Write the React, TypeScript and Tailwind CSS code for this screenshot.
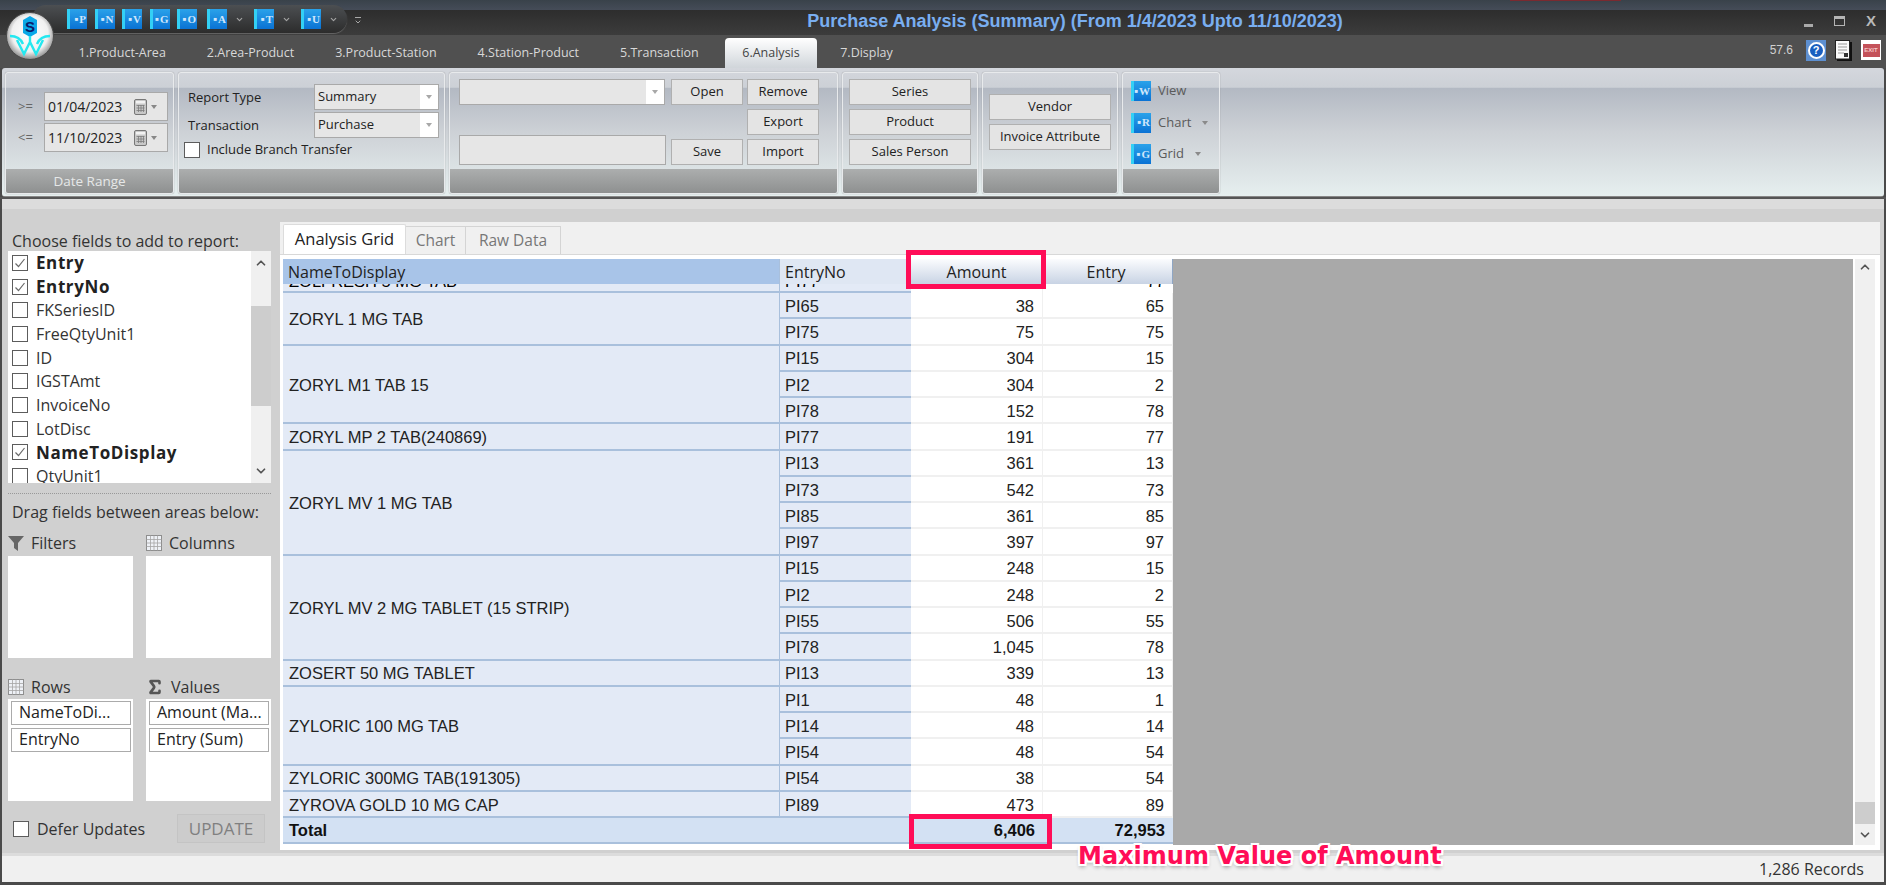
import React from 'react';
import { ChevronDown, ChevronUp, Sigma } from 'lucide-react';

type Sub = [string, string, string];
type Group = { name: string; rows: Sub[] };

const groups: Group[] = [
  { name: 'ZORYL 1 MG TAB', rows: [['PI65', '38', '65'], ['PI75', '75', '75']] },
  { name: 'ZORYL M1 TAB 15', rows: [['PI15', '304', '15'], ['PI2', '304', '2'], ['PI78', '152', '78']] },
  { name: 'ZORYL MP 2 TAB(240869)', rows: [['PI77', '191', '77']] },
  { name: 'ZORYL MV 1 MG TAB', rows: [['PI13', '361', '13'], ['PI73', '542', '73'], ['PI85', '361', '85'], ['PI97', '397', '97']] },
  { name: 'ZORYL MV 2 MG TABLET (15 STRIP)', rows: [['PI15', '248', '15'], ['PI2', '248', '2'], ['PI55', '506', '55'], ['PI78', '1,045', '78']] },
  { name: 'ZOSERT 50 MG TABLET', rows: [['PI13', '339', '13']] },
  { name: 'ZYLORIC 100 MG TAB', rows: [['PI1', '48', '1'], ['PI14', '48', '14'], ['PI54', '48', '54']] },
  { name: 'ZYLORIC 300MG TAB(191305)', rows: [['PI54', '38', '54']] },
  { name: 'ZYROVA GOLD 10 MG CAP', rows: [['PI89', '473', '89']] },
];

const fields: [string, boolean][] = [
  ['Entry', true],
  ['EntryNo', true],
  ['FKSeriesID', false],
  ['FreeQtyUnit1', false],
  ['ID', false],
  ['IGSTAmt', false],
  ['InvoiceNo', false],
  ['LotDisc', false],
  ['NameToDisplay', true],
  ['QtyUnit1', false],
];

const tabs = ['1.Product-Area', '2.Area-Product', '3.Product-Station', '4.Station-Product', '5.Transaction'];

const Caret = ({ className = 'border-t-[#9a9a9a]' }: { className?: string }) => (
  <span className={`inline-block w-0 h-0 border-x-[3px] border-x-transparent border-t-[4px] ${className}`} />
);

const BlueIcon = ({ letter }: { letter: string }) => (
  <span className="flex items-center justify-end w-[20px] h-[20px] pr-[1px] border-l-[3px] border-l-[#33d0f5] bg-[linear-gradient(#2aa2ea,#0a72d4)] font-['Liberation_Serif',serif] font-bold text-[11px] text-[#cfe6fb]">
    <span className="text-[6px] mr-[1px]">■</span>
    {letter}
  </span>
);

const Logo = () => (
  <svg viewBox="0 0 48 48" className="w-[48px] h-[48px]">
    <defs>
      <radialGradient id="silver" cx="50%" cy="45%" r="55%">
        <stop offset="0%" stopColor="#ffffff" />
        <stop offset="70%" stopColor="#f0f0f0" />
        <stop offset="100%" stopColor="#8a8a8a" />
      </radialGradient>
    </defs>
    <circle cx="24" cy="24" r="23.5" fill="url(#silver)" stroke="#4a4a4a" />
    <path d="M24 4l7 4v13l-7 4-7-4V8z" fill="#0aa8e8" />
    <text x="24" y="20" textAnchor="middle" fontFamily="Liberation Sans, sans-serif" fontWeight="700" fontSize="15" fill="#0a1a6a">S</text>
    <path d="M4 24c7 0 11 3 13 8M44 24c-7 0-11 3-13 8M11 28l7 14 6-12 6 12 7-14M24 24v6" fill="none" stroke="#25e8f0" strokeWidth="2.4" />
  </svg>
);

const CalendarIcon = () => (
  <span className="flex items-center gap-[3px]">
    <svg viewBox="0 0 14 16" className="w-[14px] h-[16px]">
      <rect x="0.5" y="0.5" width="12" height="15" rx="1.5" fill="#c8c8c8" stroke="#777" />
      <rect x="2" y="2" width="9" height="2.5" fill="#f2f2f2" />
      <path d="M2.5 6.5h8M2.5 9h8M2.5 11.5h8M4.5 6v7M7 6v7M9.5 6v7" stroke="#7c7c7c" strokeWidth="0.8" />
    </svg>
    <Caret className="border-t-[#888]" />
  </span>
);

const DateInput = ({ value }: { value: string }) => (
  <div className="flex items-center justify-between h-[29px] w-[124px] pl-[3px] pr-[10px] bg-[#e6e6e6] border border-[#a9a9a9] text-[#222] text-[14px]">
    {value}
    <CalendarIcon />
  </div>
);

const Combo = ({ value, w = 'w-[125px]' }: { value?: string; w?: string }) => (
  <div className={`flex h-[26px] ${w} bg-[#e6e6e6] border border-[#a9a9a9] text-[#222] text-[13px]`}>
    <span className="flex-1 px-[3px] leading-[22px]">{value}</span>
    <span className="flex items-center justify-center w-[18px] bg-white">
      <Caret className="border-t-[#a8a8a8]" />
    </span>
  </div>
);

const RibbonButton = ({ label, w = 'w-[72px]' }: { label: string; w?: string }) => (
  <div className={`flex items-center justify-center h-[26px] ${w} bg-[#e4e4e4] border border-[#b0b0b0] text-[#222] text-[13px]`}>
    {label}
  </div>
);

const RibbonGroup = ({ w, footer, children }: { w: string; footer?: string; children: React.ReactNode }) => (
  <div className={`flex flex-col ${w} h-[122px] rounded-[3px] border border-[#e8eaec] shadow-[0_0_1px_#777] overflow-hidden`}>
    <div className="flex-1 min-h-0">{children}</div>
    <div className="flex items-center justify-center h-[24px] bg-[linear-gradient(#acaeae,#8e9090)] text-[#e6e8e8] text-[13.5px]">
      {footer}
    </div>
  </div>
);

const SideItem = ({ letter, label, caret }: { letter: string; label: string; caret?: boolean }) => (
  <div className="flex items-center h-[20px] text-[#5a5a5a] text-[13px]">
    <BlueIcon letter={letter} />
    <span className="ml-[7px]">{label}</span>
    {caret && <Caret className="ml-[11px] border-t-[#8a8a8a]" />}
  </div>
);

const CheckBox = ({ checked }: { checked?: boolean }) => (
  <span className="flex items-center justify-center shrink-0 w-[16px] h-[16px] bg-white border-[1.5px] border-[#5c5c5c]">
    {checked && (
      <svg viewBox="0 0 12 12" className="w-[12px] h-[12px]">
        <path d="M1.5 6.5l3 3 6-7.5" fill="none" stroke="#6a6a6a" strokeWidth="1.2" />
      </svg>
    )}
  </span>
);

const GridGlyph = () => (
  <svg viewBox="0 0 16 16" className="w-[16px] h-[16px] shrink-0">
    <rect x="0.5" y="0.5" width="15" height="15" fill="#eef1f6" stroke="#8e8e8e" />
    <path d="M0.5 4.5h15M0.5 8h15M0.5 11.5h15M4.5 0.5v15M8 0.5v15M11.5 0.5v15" stroke="#a5a5a5" strokeWidth="0.8" />
  </svg>
);

const ZoneLabel = ({ icon, label }: { icon: React.ReactNode; label: string }) => (
  <div className="flex items-center gap-[7px] h-[20px] text-[#333]">
    {icon}
    {label}
  </div>
);

const Chip = ({ label }: { label: string }) => (
  <div className="h-[24px] mb-[3px] px-[7px] bg-white border-[1.5px] border-[#ababab] leading-[20px] text-[#222] whitespace-nowrap">{label}</div>
);

const headBase = 'flex items-center h-[25px] text-[16px] text-[#222]';
const nameCell = 'flex items-center pl-[6px] pt-[2px] bg-[#e3eaf6] border-b-2 border-[#a9c0dc] text-[#222]';
const subCell = 'flex items-center pl-[5px] pt-[2px] bg-[#e3eaf6] border-b-2 border-l border-[#a9c0dc] text-[#222]';
const dataCell = 'flex items-center justify-end pr-[8px] pt-[2px] bg-white border-b-2 border-r border-[#f0f0f0] text-[#222]';

const PivotGrid = () => (
  <div className="w-[890px] shrink-0 font-['Liberation_Sans',sans-serif] text-[16.5px]">
    <div className="grid grid-cols-[496px_132px_132px_130px] font-['Open_Sans',sans-serif]">
      <div className={`${headBase} pl-[5px] bg-[#a8c4e8] text-[16.8px]`}>NameToDisplay</div>
      <div className={`${headBase} pl-[5px] bg-[#dfe7f3] border-l border-[#a9c0dc]`}>EntryNo</div>
      <div className={`${headBase} justify-center bg-[linear-gradient(#fbfcfe,#c8d3e4)] border-r border-[#c0cbdc]`}>Amount</div>
      <div className={`${headBase} justify-center pr-[3px] bg-[linear-gradient(#fbfcfe,#c8d3e4)] border-r border-[#8fa6c4]`}>Entry</div>
    </div>
    <div className="grid grid-cols-[496px_132px_132px_130px] h-[9px] overflow-hidden">
      <div className="pl-[6px] bg-[#e3eaf6] border-b-2 border-[#a9c0dc] overflow-hidden"><p className="-mt-[15px]">ZOLFRESH 5 MG TAB</p></div>
      <div className="pl-[5px] bg-[#e3eaf6] border-b-2 border-l border-[#a9c0dc] overflow-hidden"><p className="-mt-[15px]">PI77</p></div>
      <div className="bg-white border-r border-[#f0f0f0]" />
      <div className="pr-[8px] text-right bg-white overflow-hidden"><p className="-mt-[15px]">77</p></div>
    </div>
    <div className="grid grid-cols-[496px_132px_132px_130px] auto-rows-[26.25px]">
      {groups.map((g) =>
        g.rows.map((r, i) => (
          <React.Fragment key={g.name + r[0]}>
            {i === 0 && (
              <div className={nameCell} style={{ gridRow: `span ${g.rows.length}` }}>
                {g.name}
              </div>
            )}
            <div className={`${subCell} col-start-2`}>{r[0]}</div>
            <div className={dataCell}>{r[1]}</div>
            <div className={dataCell}>{r[2]}</div>
          </React.Fragment>
        )),
      )}
      <div className="col-span-2 flex items-center pl-[6px] bg-[#d3e1f3] border-b-2 border-[#a9c0dc] font-bold text-[#111]">Total</div>
      <div className="flex items-center justify-end pr-[8px] bg-[#d3e1f3] border-b-2 border-[#a9c0dc] font-bold text-[#111]">6,406</div>
      <div className="flex items-center justify-end pr-[8px] bg-[#d3e1f3] border-b-2 border-[#a9c0dc] font-bold text-[#111]">72,953</div>
    </div>
  </div>
);

export default function App() {
  return (
    <div className="relative flex flex-col w-[1886px] h-[885px] overflow-hidden bg-[#4a4a4a] font-['Open_Sans',sans-serif]">
      {/* window chrome */}
      <div className="relative h-[10px] bg-[linear-gradient(#39424a,#454c58)]">
        <span className="absolute left-[1510px] top-0 w-[111px] h-px bg-[#7a2a30]" />
      </div>
      <div className="relative flex items-center justify-center h-[25px] pl-[264px] pb-[3px] bg-[linear-gradient(#2d2d2d,#3c3c3c)]">
        <span className="font-['Liberation_Sans',sans-serif] font-bold text-[18px] text-[#79aef0]">
          Purchase Analysis (Summary) (From 1/4/2023 Upto 11/10/2023)
        </span>
        <div className="absolute right-[10px] top-[3px] flex items-center gap-[21px] text-[#b9b9b9]">
          <span className="w-[9px] h-[3px] mt-[9px] bg-[#aaa]" />
          <span className="w-[11px] h-[10px] border-[1.5px] border-t-[3px] border-[#b5b5b5]" />
          <span className="font-['Liberation_Sans',sans-serif] font-bold text-[15px] leading-[16px]">X</span>
        </div>
      </div>

      {/* quick access pill + logo */}
      <div className="absolute left-[32px] top-[5px] flex items-center w-[315px] h-[28px] pl-[35px] rounded-[14px] bg-[linear-gradient(#4c4f52,#2c2c2c)] shadow-[0_1px_1px_#666]">
        <div className="flex gap-[7.5px]">
          {['P', 'N', 'V', 'G', 'O'].map((l) => (
            <BlueIcon key={l} letter={l} />
          ))}
        </div>
        {['A', 'T', 'U'].map((l) => (
          <span key={l} className="flex items-center ml-[10px] first:ml-[9px] gap-[8px]">
            <BlueIcon letter={l} />
            <ChevronDown size={9} strokeWidth={3} className="text-[#a5a5a5]" />
          </span>
        ))}
      </div>
      <span className="absolute left-[354px] top-[17px] flex flex-col items-center text-[#a8a8a8]">
        <span className="w-[6px] h-px bg-[#a8a8a8]" />
        <ChevronDown size={8} strokeWidth={3} />
      </span>
      <div className="absolute left-[6px] top-[12px]">
        <Logo />
      </div>

      {/* tabs */}
      <div className="flex items-end h-[33px] pl-[58px] bg-[#505050] text-[12.5px] text-[#d8d8d8]">
        {tabs.map((t) => (
          <span key={t} className="h-[30px] px-[20.5px] leading-[30px] whitespace-nowrap">{t}</span>
        ))}
        <span className="h-[30px] ml-[6px] mr-[3px] px-[17px] leading-[30px] rounded-t-[4px] bg-[linear-gradient(#ffffff,#d0d5da)] text-[#444]">6.Analysis</span>
        <span className="h-[30px] px-[20.5px] leading-[30px]">7.Display</span>
        <div className="ml-auto flex items-center gap-[9px] pr-[5px] h-[30px] -translate-y-[3px]">
          <span className="mr-[4px] text-[12px] text-[#d0d0d0] font-['Liberation_Sans',sans-serif]">57.6</span>
          <span className="flex items-center justify-center w-[20px] h-[21px] bg-[#5d8fd0]">
            <span className="flex items-center justify-center w-[17px] h-[17px] rounded-full bg-[#1a5fc0] border-2 border-white font-['Liberation_Sans',sans-serif] font-bold text-[11px] text-white">?</span>
          </span>
          <svg viewBox="0 0 17 21" className="w-[17px] h-[21px]">
            <rect x="2" y="2" width="15" height="19" fill="#111" />
            <rect x="0.5" y="0.5" width="14" height="18.5" fill="#fafafa" stroke="#222" />
            <path d="M3 4h9M3 7h9M3 10h9M3 13h6" stroke="#999" />
            <rect x="9" y="13" width="4" height="4" fill="#333" />
          </svg>
          <span className="flex items-center justify-center w-[20px] h-[20px] bg-white">
            <span className="flex items-center justify-center w-[17px] h-[13px] bg-[#c4525a] font-['Liberation_Sans',sans-serif] font-bold text-[6px] text-[#f4c8c8]">EXIT</span>
          </span>
        </div>
      </div>

      {/* ribbon */}
      <div className="flex gap-[4px] h-[129px] mx-[2px] pt-[4px] pl-[3px] rounded-[3px] bg-[linear-gradient(#d4d7dd_0%,#ccd0d6_15%,#b3b9c3_16%,#cdd1d6_50%,#e6efef_100%)] border-b border-[#888]">
        <RibbonGroup w="w-[169px]" footer="Date Range">
          <div className="flex flex-col gap-[2px] pt-[19px] pl-[12px] text-[13px] text-[#666]">
            <div className="flex items-center gap-[10px]"><span className="w-[16px]">&gt;=</span><DateInput value="01/04/2023" /></div>
            <div className="flex items-center gap-[10px]"><span className="w-[16px]">&lt;=</span><DateInput value="11/10/2023" /></div>
          </div>
        </RibbonGroup>
        <RibbonGroup w="w-[267px]">
          <div className="pt-[11px] pl-[9px] text-[13px] text-[#222]">
            <div className="flex items-center justify-between w-[251px]"><span className="mt-[2px]">Report Type</span><Combo value="Summary" /></div>
            <div className="flex items-center justify-between w-[251px] mt-[2px]"><span className="mt-[2px]">Transaction</span><Combo value="Purchase" /></div>
            <label className="flex items-center gap-[7px] -ml-[4px] mt-[2px]"><CheckBox />Include Branch Transfer</label>
          </div>
        </RibbonGroup>
        <RibbonGroup w="w-[389px]">
          <div className="grid grid-cols-[206px_72px_72px] grid-rows-[26px_26px_26px] gap-y-[4px] gap-x-[5px] pt-[6px] pl-[9px]">
            <Combo w="w-[206px]" />
            <span className="ml-[1px]"><RibbonButton label="Open" /></span>
            <RibbonButton label="Remove" />
            <span className="col-start-3"><RibbonButton label="Export" /></span>
            <div className="col-start-1 row-start-3 self-end h-[30px] w-[207px] bg-[#e6e6e6] border border-[#a9a9a9]" />
            <span className="col-start-2 row-start-3 ml-[1px]"><RibbonButton label="Save" /></span>
            <span className="col-start-3 row-start-3"><RibbonButton label="Import" /></span>
          </div>
        </RibbonGroup>
        <RibbonGroup w="w-[136px]">
          <div className="flex flex-col gap-[4px] pt-[6px] pl-[6px]">
            <RibbonButton label="Series" w="w-[122px]" />
            <RibbonButton label="Product" w="w-[122px]" />
            <RibbonButton label="Sales Person" w="w-[122px]" />
          </div>
        </RibbonGroup>
        <RibbonGroup w="w-[136px]">
          <div className="flex flex-col gap-[4px] pt-[21px] pl-[6px]">
            <RibbonButton label="Vendor" w="w-[122px]" />
            <RibbonButton label="Invoice Attribute" w="w-[122px]" />
          </div>
        </RibbonGroup>
        <RibbonGroup w="w-[98px]">
          <div className="flex flex-col gap-[11.5px] pt-[8px] pl-[8px]">
            <SideItem letter="W" label="View" />
            <SideItem letter="R" label="Chart" caret />
            <SideItem letter="G" label="Grid" caret />
          </div>
        </RibbonGroup>
      </div>
      <div className="h-[2px] bg-[#555]" />

      {/* main area */}
      <div className="flex h-[654px] mx-[2px] bg-[linear-gradient(#dcdcdc_10px,#d0d0d0_10px)]">
        <aside className="flex flex-col w-[278px] shrink-0 pt-[32px] pl-[6px] pr-[9px] text-[16px] text-[#333]">
          <div className="h-[20px] leading-[20px] pl-[4px] whitespace-nowrap">Choose fields to add to report:</div>
          <div className="flex h-[232px] bg-white overflow-hidden">
            <div className="flex-1 pl-[4px]">
              {fields.map(([name, on]) => (
                <div key={name} className="flex items-center gap-[8px] h-[23.7px] shrink-0">
                  <CheckBox checked={on} />
                  <span className={on ? 'font-bold text-[17px] tracking-[0.6px] text-[#222]' : 'text-[#333]'}>{name}</span>
                </div>
              ))}
            </div>
            <div className="flex flex-col items-center w-[20px] h-[232px] bg-[#f0f0f0]">
              <ChevronUp size={14} strokeWidth={3} className="mt-[5px] text-[#555]" />
              <span className="w-full h-[100px] mt-[36px] bg-[#cdcdcd]" />
              <ChevronDown size={14} strokeWidth={3} className="mt-auto mb-[5px] text-[#555]" />
            </div>
          </div>
          <div className="mt-[10px] border-t border-dotted border-[#999]" />
          <div className="mt-[8px] h-[20px] leading-[20px] pl-[4px] whitespace-nowrap">Drag fields between areas below:</div>
          <div className="grid grid-cols-[125px_125px] gap-x-[13px] mt-[11px]">
            <ZoneLabel
              icon={
                <svg viewBox="0 0 16 16" className="w-[16px] h-[16px]"><path d="M0 1h16l-6 7v8l-4-3V8z" fill="#666" /></svg>
              }
              label="Filters"
            />
            <ZoneLabel icon={<GridGlyph />} label="Columns" />
            <div className="h-[102px] mt-[3px] bg-white" />
            <div className="h-[102px] mt-[3px] bg-white" />
            <div className="mt-[19px]"><ZoneLabel icon={<GridGlyph />} label="Rows" /></div>
            <div className="mt-[19px]"><ZoneLabel icon={<Sigma size={18} strokeWidth={3.5} className="text-[#555]" />} label="Values" /></div>
            <div className="h-[102px] mt-[2px] p-[2px] pl-[3px] bg-white">
              <Chip label="NameToDi..." />
              <Chip label="EntryNo" />
            </div>
            <div className="h-[102px] mt-[2px] p-[2px] pl-[3px] bg-white">
              <Chip label="Amount (Ma..." />
              <Chip label="Entry (Sum)" />
            </div>
          </div>
          <div className="flex items-center h-[29px] mt-[13px] pl-[5px]">
            <CheckBox />
            <span className="ml-[8px]">Defer Updates</span>
            <span className="ml-auto mr-[6px] flex items-center justify-center w-[88px] h-[29px] border border-[#c4c4c4] bg-[#cccccc] text-[17px] text-[#808080]">UPDATE</span>
          </div>
        </aside>

        <section className="flex flex-col flex-1 min-w-0 mt-[23px] mb-[3px] mr-[4px] pt-[2px] bg-[#f0f0f0]">
          <div className="flex items-end h-[30px] pl-[3px] text-[15.5px]">
            <span className="flex items-center justify-center w-[123px] h-[30px] rounded-t-[2px] bg-white border border-b-0 border-[#dcdcdc] text-[16.5px] text-[#222]">Analysis Grid</span>
            <span className="flex items-center justify-center w-[60px] h-[28px] border-t border-r border-[#d4d4d4] text-[#777]">Chart</span>
            <span className="flex items-center justify-center w-[95px] h-[28px] border-t border-r border-[#d4d4d4] text-[#777]">Raw Data</span>
          </div>
          <div className="flex flex-1 pt-[4px] pl-[3px] pr-[3px] bg-white border-t border-[#d8d8d8]">
            <PivotGrid />
            <div className="w-[680px] h-[586px] bg-[#a9a9a9]" />
            <div className="flex flex-col items-center w-[20px] h-[586px] ml-[2px] bg-[#f0f0f0]">
              <ChevronUp size={14} strokeWidth={3} className="mt-[1px] text-[#555]" />
              <span className="w-full h-[22px] mt-auto mb-[4px] bg-[#cdcdcd]" />
              <ChevronDown size={14} strokeWidth={3} className="mb-[3px] text-[#555]" />
            </div>
          </div>
        </section>
      </div>

      {/* status bar */}
      <div className="flex items-center justify-end h-[29px] mx-[2px] pr-[20px] bg-[#f0f0f0] border-t-[3px] border-[#dcdcdc] text-[16px] text-[#333]">
        1,286 Records
      </div>

      {/* annotations */}
      <div className="absolute left-[906px] top-[250px] w-[140px] h-[39px] border-[5px] border-[#ff0d57]" />
      <div className="absolute left-[909px] top-[814px] w-[143px] h-[35px] border-[5px] border-[#ff0d57]" />
      <span className="absolute left-[1078px] top-[840px] font-['DejaVu_Sans',sans-serif] font-bold text-[24px] leading-[32px] whitespace-nowrap text-[#ff0d57] [text-shadow:-2px_0_#fff,2px_0_#fff,0_-2px_#fff,0_2px_#fff,-2px_-2px_#fff,2px_2px_#fff,-2px_2px_#fff,2px_-2px_#fff,0_3px_4px_#888]">
        Maximum Value of Amount
      </span>
    </div>
  );
}
